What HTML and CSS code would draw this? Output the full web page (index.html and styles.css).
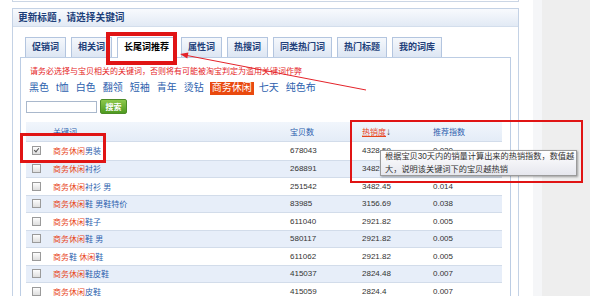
FILE: index.html
```html
<!DOCTYPE html>
<html lang="zh-CN">
<head>
  <meta charset="UTF-8">
  <meta name="viewport" content="width=device-width, initial-scale=1.0">
  <title>更新标题</title>
  <link rel="stylesheet" href="styles.css">
</head>
<body>
  <div class="page">
    <div class="main">
      <div class="prev"></div>
      <div class="panel">
        <div class="panel-hd">更新标题，请选择关键词</div>
        <div class="panel-bd">
          <ul class="tabs">
            <li>促销词</li>
            <li>相关词</li>
            <li class="active">长尾词推荐</li>
            <li>属性词</li>
            <li>热搜词</li>
            <li>同类热门词</li>
            <li>热门标题</li>
            <li>我的词库</li>
          </ul>
          <div class="tab-box">
            <p class="notice">请务必选择与宝贝相关的关键词，否则将有可能被淘宝判定为滥用关键词作弊</p>
            <div class="words">
              <a>黑色</a><a>t恤</a><a>白色</a><a>翻领</a><a>短袖</a><a>青年</a><a>烫钻</a><a class="on">商务休闲</a><a>七天</a><a>纯色布</a>
            </div>
            <div class="search">
              <input class="kw-input" type="text">
              <button class="btn">搜索</button>
            </div>
            <div class="grid">
              <div class="row head">
                <span></span>
                <span class="c-key">关键词</span>
                <span class="c-blue">宝贝数</span>
                <span class="c-sort"><u>热销度</u><b>↓</b></span>
                <span class="c-blue">推荐指数</span>
              </div>
              <div class="row">
                <span><i class="cb checked"></i></span>
                <span><em>商务休闲</em>男装</span>
                <span>678043</span><span>4328.59</span><span>0.020</span>
              </div>
              <div class="row">
                <span><i class="cb"></i></span>
                <span><em>商务休闲</em>衬衫</span>
                <span>268891</span><span>3482.45</span><span>0.013</span>
              </div>
              <div class="row">
                <span><i class="cb"></i></span>
                <span><em>商务休闲</em>衬衫 男</span>
                <span>251542</span><span>3482.45</span><span>0.014</span>
              </div>
              <div class="row">
                <span><i class="cb"></i></span>
                <span><em>商务休闲</em>鞋 男鞋特价</span>
                <span>83985</span><span>3156.69</span><span>0.038</span>
              </div>
              <div class="row">
                <span><i class="cb"></i></span>
                <span><em>商务休闲</em>鞋子</span>
                <span>611040</span><span>2921.82</span><span>0.005</span>
              </div>
              <div class="row">
                <span><i class="cb"></i></span>
                <span><em>商务休闲</em>鞋 男</span>
                <span>580117</span><span>2921.82</span><span>0.005</span>
              </div>
              <div class="row">
                <span><i class="cb"></i></span>
                <span><em>商务</em>鞋 <em>休闲</em>鞋</span>
                <span>611062</span><span>2921.82</span><span>0.005</span>
              </div>
              <div class="row">
                <span><i class="cb"></i></span>
                <span><em>商务休闲</em>鞋皮鞋</span>
                <span>415037</span><span>2824.48</span><span>0.007</span>
              </div>
              <div class="row">
                <span><i class="cb"></i></span>
                <span><em>商务休闲</em>皮鞋</span>
                <span>415059</span><span>2824.4</span><span>0.007</span>
              </div>
            </div>
          </div>
        </div>
      </div>
    </div>
    <div class="side"></div>
  </div>

  <!-- 标注 -->
  <div class="mark mark-tab"></div>
  <div class="mark mark-row"></div>
  <div class="mark mark-heat"></div>
  <svg class="arrow" width="590" height="296" viewBox="0 0 590 296">
    <line x1="366" y1="90" x2="187" y2="55.5" stroke="#e4232a" stroke-width="1"/>
    <polygon points="180,54 188.4,52.4 187.3,58.6" fill="#e4232a"/>
  </svg>
  <div class="tip">根据宝贝30天内的销量计算出来的热销指数，数值越<br>大，说明该关键词下的宝贝越热销</div>
</body>
</html>
```

FILE: styles.css
```css
* {
  margin: 0;
  padding: 0;
  box-sizing: border-box;
}

body {
  font-family: "Liberation Sans", "Noto Sans CJK SC", sans-serif;
  font-size: 8px;
  color: #333;
  background-color: #fff;
  overflow: hidden;
}

.page {
  display: flex;
  height: 296px;
  overflow: hidden;
}

.main {
  width: 533px;
  flex: none;
}

.side {
  flex: 1;
  background-color: #eeeeee;
  border-left: 9px solid #f5f6f8;
}

.prev {
  margin-left: 12px;
  width: 507px;
  height: 2px;
  border: 1px solid #cbd6e5;
  border-top: none;
}

.panel {
  margin: 6px 0 0 12px;
  width: 507px;
  height: 300px;
  border: 1px solid #c4d2e5;
  border-bottom: none;
}

.panel-hd {
  height: 18px;
  line-height: 17px;
  padding-left: 5px;
  border-bottom: 1px solid #d3deec;
  background: linear-gradient(#f8fafd, #e2eaf5);
  color: #1d3f7a;
  font-size: 9.7px;
  font-weight: bold;
}

.panel-bd {
  padding: 10px 7px 0 7px;
}

.tabs {
  list-style: none;
  display: flex;
  align-items: flex-end;
  gap: 5px;
  height: 20px;
  padding-left: 5px;
}

.tabs li {
  height: 20px;
  line-height: 18px;
  padding: 0 6px;
  border: 1px solid #b3c5df;
  border-bottom: none;
  background: linear-gradient(#f5f8fc, #dde6f3);
  color: #22407a;
  font-size: 9px;
  font-weight: bold;
}

.tabs li.active {
  position: relative;
  height: 21px;
  margin-bottom: -1px;
  background: #fff;
  color: #000;
}

.tab-box {
  border: 1px solid #bccde4;
  padding: 8px 8px 30px 5px;
}

.notice {
  padding-left: 4px;
  line-height: 12px;
  color: #e5251f;
}

.words {
  display: flex;
  margin-top: 3px;
  padding-left: 3px;
  line-height: 14px;
  font-size: 10px;
  color: #2d5fae;
}

.words a {
  margin-right: 7px;
}

.words a.on {
  margin: 1px 5px 0 -1px;
  padding: 0 2px;
  line-height: 12px;
  background-color: #e9490f;
  color: #fff;
}

.search {
  display: flex;
  align-items: center;
  gap: 3px;
  margin-top: 4px;
  height: 15px;
}

.kw-input {
  width: 71px;
  height: 12px;
  border: 1px solid #a9b8cc;
  background: #fff;
}

.btn {
  width: 27px;
  height: 15px;
  border: 1px solid #4d8c27;
  border-radius: 2px;
  background: linear-gradient(#8cc84b, #4f9b20);
  color: #fff;
  font-family: inherit;
  font-size: 8px;
  font-weight: bold;
}

.grid {
  margin-top: 8px;
}

.row {
  display: grid;
  grid-template-columns: 21px 237px 72px 71px 75px;
  align-items: center;
  height: 17.5px;
  border-top: 1px solid #d2dcea;
}

.row:nth-child(odd) {
  background-color: #e7eef9;
}

.row > span {
  padding-left: 6px;
  white-space: nowrap;
}

.row.head {
  height: 20px;
  border-top: none;
  border-bottom: 1px solid #d2dcea;
  background: linear-gradient(#f1f6fc, #e4ecf7);
}

.row.head + .row {
  border-top: none;
}

.row .c-key {
  color: #222;
}

.row .c-blue {
  color: #2d5fae;
}

.row .c-sort u {
  color: #e8461c;
}

.row .c-sort b {
  color: #444;
  font-size: 10px;
}

.row em {
  font-style: normal;
  color: #e8461c;
}

.row > span:nth-child(2) {
  color: #2d5fae;
}

.cb {
  display: block;
  width: 9px;
  height: 9px;
  border: 1px solid #9a9a9a;
  background: linear-gradient(#fdfdfd, #dedede);
}

.cb.checked {
  position: relative;
}

.cb.checked::after {
  content: "";
  position: absolute;
  left: 2px;
  top: 0;
  width: 2px;
  height: 4px;
  border: solid #555;
  border-width: 0 1px 1px 0;
  transform: rotate(40deg);
}

.mark {
  position: absolute;
  border: 3px solid #e01414;
}

.mark-tab {
  left: 106px;
  top: 32px;
  width: 71px;
  height: 33px;
  border-width: 4px;
}

.mark-row {
  left: 20px;
  top: 133px;
  width: 86px;
  height: 30px;
}

.mark-heat {
  left: 350px;
  top: 120px;
  width: 233px;
  height: 63px;
  border-width: 2px;
}

.arrow {
  position: absolute;
  left: 0;
  top: 0;
  pointer-events: none;
}

.tip {
  position: absolute;
  left: 380px;
  top: 150px;
  width: 197px;
  height: 26px;
  padding: 0 3px 0 4px;
  line-height: 12.5px;
  border: 1px solid #9a9a9a;
  background: linear-gradient(#ffffff, #e6e7ee);
  box-shadow: 1px 1px 2px rgba(0,0,0,.35);
  color: #333;
  font-size: 8.2px;
  white-space: nowrap;
}
```
